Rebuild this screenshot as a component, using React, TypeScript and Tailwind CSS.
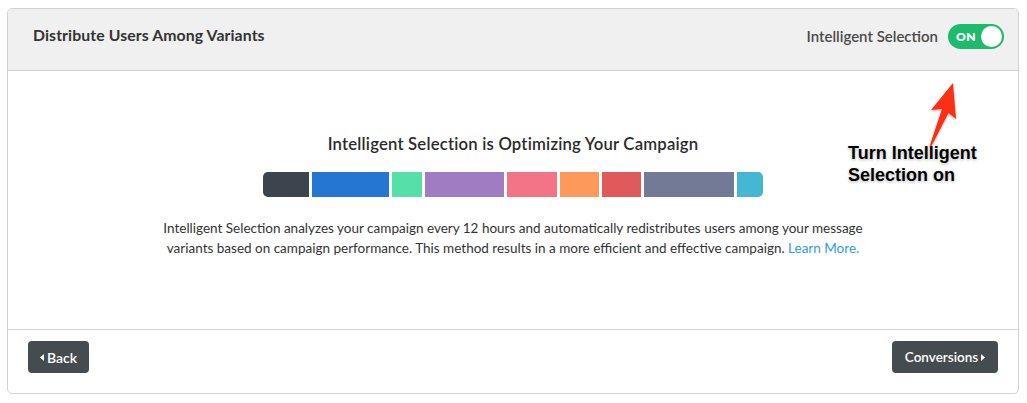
import React from "react";

const segments = [
  { w: 46, c: "bg-[#3c454d]" },
  { w: 77, c: "bg-[#2476d2]" },
  { w: 30, c: "bg-[#56e0a8]" },
  { w: 79, c: "bg-[#a07cc2]" },
  { w: 50, c: "bg-[#f47487]" },
  { w: 39, c: "bg-[#fd9a5b]" },
  { w: 39, c: "bg-[#e05a5a]" },
  { w: 90, c: "bg-[#737a95]" },
  { w: 26, c: "bg-[#45b7d3]" },
];

export default function App() {
  return (
    <div className="w-[1027px] h-[403px] bg-white pl-[7px] pt-[8px] font-['Lato','Noto_Sans',sans-serif]">
      <div className="relative w-[1012px] h-[386px] border border-[#d2d2d2] rounded-[5px] flex flex-col overflow-hidden">
        <div className="h-[62px] bg-[#f0f0f0] border-b border-[#d2d2d2] flex items-start justify-between pl-[25px] pr-[14px]">
          <div className="pt-[14px] text-[15.8px] font-bold text-[#333] tracking-[0.1px]">Distribute Users Among Variants</div>
          <div className="flex items-center gap-[10px] pt-[15px]">
            <span className="text-[15px] font-semibold text-[#4a4a4a]">Intelligent Selection</span>
            <div className="w-[56px] h-[25px] rounded-full bg-[#1dbb6b] flex items-center justify-between pl-[8px] pr-[2px]">
              <span className="text-[12px] font-extrabold text-white tracking-[0.5px]">ON</span>
              <div className="w-[21px] h-[21px] rounded-full bg-white" />
            </div>
          </div>
        </div>
        <div className="flex-1 flex flex-col items-center pt-[62px]">
          <div className="text-[16.7px] font-semibold text-[#2b2b2b] leading-[22px] tracking-[0.2px]">Intelligent Selection is Optimizing Your Campaign</div>
          <div className="flex gap-[3px] mt-[17px] rounded-[5px] overflow-hidden h-[25px] w-[500px]">
            {segments.map((s, i) => (
              <div key={i} style={{ width: s.w }} className={`h-full ${s.c}`} />
            ))}
          </div>
          <p className="mt-[22px] text-[13.5px] leading-[19.5px] text-[#333] text-center w-[712px]">
            Intelligent Selection analyzes your campaign every 12 hours and automatically redistributes users among your message variants based on campaign performance. This method results in a more efficient and effective campaign. <span className="text-[#2f9be3]">Learn More.</span>
          </p>
        </div>
        <div className="h-[64px] border-t border-[#d2d2d2] flex items-start justify-between pl-[20px] pr-[20px] pt-[11px]">
          <button className="h-[32px] w-[61px] rounded-[4px] bg-[#454c50] text-white text-[14px] font-semibold flex items-center justify-center gap-[3px]">
            <svg width="4" height="7" viewBox="0 0 4 7"><path d="M4 0 L0 3.5 L4 7 Z" fill="white" /></svg>
            Back
          </button>
          <button className="h-[32px] w-[106px] rounded-[4px] bg-[#454c50] text-white text-[13.5px] font-semibold flex items-center justify-center gap-[3px]">
            Conversions
            <svg width="4" height="7" viewBox="0 0 4 7"><path d="M0 0 L4 3.5 L0 7 Z" fill="white" /></svg>
          </button>
        </div>
        <svg className="absolute left-[907px] top-[70px]" width="50" height="75" viewBox="0 0 50 75">
          <defs>
            <filter id="sh" x="-50%" y="-50%" width="200%" height="200%">
              <feDropShadow dx="0" dy="1" stdDeviation="1" floodColor="#000" floodOpacity="0.35" />
            </filter>
          </defs>
          <path d="M38 4 L41 40 L33.5 34 L16 68 L14.5 67.5 L27 30 L16 31 Z" fill="#fb2f17" filter="url(#sh)" />
        </svg>
        <div className="absolute left-[840px] top-[133px] text-[18px] leading-[22px] font-bold text-black font-['Liberation_Sans',Arial,sans-serif] [text-shadow:0_0_2px_#fff,0_1px_3px_rgba(0,0,0,0.35)]">
          Turn Intelligent<br />Selection on
        </div>
      </div>
    </div>
  );
}
